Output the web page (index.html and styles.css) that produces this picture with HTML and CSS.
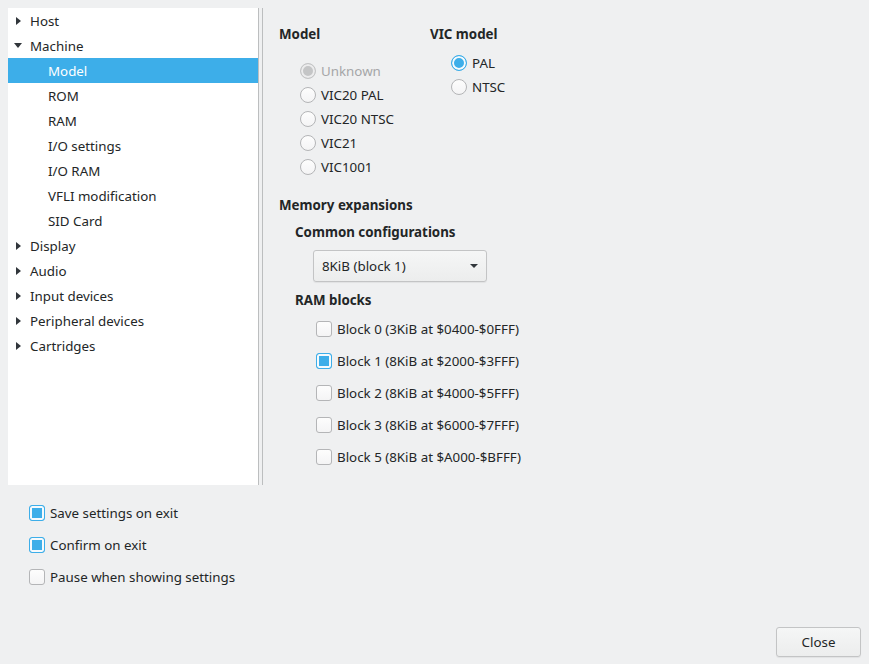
FILE: index.html
```html
<!DOCTYPE html>
<html lang="en">
<head>
<meta charset="UTF-8">
<title>Settings</title>
<link rel="stylesheet" href="styles.css">
</head>
<body>

<div class="window">
  <div class="top">
    <div class="tree">
      <div class="node"><span class="arrow closed"></span>Host</div>
      <div class="node"><span class="arrow open"></span>Machine</div>
      <div class="node child selected">Model</div>
      <div class="node child">ROM</div>
      <div class="node child">RAM</div>
      <div class="node child">I/O settings</div>
      <div class="node child">I/O RAM</div>
      <div class="node child">VFLI modification</div>
      <div class="node child">SID Card</div>
      <div class="node"><span class="arrow closed"></span>Display</div>
      <div class="node"><span class="arrow closed"></span>Audio</div>
      <div class="node"><span class="arrow closed"></span>Input devices</div>
      <div class="node"><span class="arrow closed"></span>Peripheral devices</div>
      <div class="node"><span class="arrow closed"></span>Cartridges</div>
    </div>
    <div class="splitter"></div>
    <div class="pane">
      <div class="models">
        <div class="group model-group">
          <div class="title">Model</div>
          <div class="radios">
            <div class="radio-row disabled"><span class="radio checked"></span>Unknown</div>
            <div class="radio-row"><span class="radio"></span>VIC20 PAL</div>
            <div class="radio-row"><span class="radio"></span>VIC20 NTSC</div>
            <div class="radio-row"><span class="radio"></span>VIC21</div>
            <div class="radio-row"><span class="radio"></span>VIC1001</div>
          </div>
        </div>
        <div class="group vic-group">
          <div class="title">VIC model</div>
          <div class="radios">
            <div class="radio-row"><span class="radio checked"></span>PAL</div>
            <div class="radio-row"><span class="radio"></span>NTSC</div>
          </div>
        </div>
      </div>

      <div class="title mem-title">Memory expansions</div>
      <div class="mem">
        <div class="title sub-title">Common configurations</div>
        <div class="combo">
          <span>8KiB (block 1)</span>
          <span class="combo-arrow"></span>
        </div>
        <div class="title sub-title ram-title">RAM blocks</div>
        <div class="blocks">
          <div class="check-row"><span class="check"></span>Block 0 (3KiB at $0400-$0FFF)</div>
          <div class="check-row"><span class="check checked"></span>Block 1 (8KiB at $2000-$3FFF)</div>
          <div class="check-row"><span class="check"></span>Block 2 (8KiB at $4000-$5FFF)</div>
          <div class="check-row"><span class="check"></span>Block 3 (8KiB at $6000-$7FFF)</div>
          <div class="check-row"><span class="check"></span>Block 5 (8KiB at $A000-$BFFF)</div>
        </div>
      </div>
    </div>
  </div>

  <div class="options">
    <div class="check-row"><span class="check checked"></span>Save settings on exit</div>
    <div class="check-row"><span class="check checked"></span>Confirm on exit</div>
    <div class="check-row"><span class="check"></span>Pause when showing settings</div>
  </div>

  <div class="buttons">
    <button class="btn">Close</button>
  </div>
</div>

</body>
</html>
```

FILE: styles.css
```css
/* Breeze-like settings dialog */
body {
  margin: 0;
  padding: 0;
  background-color: #eff0f1;
  color: #232627;
  font-family: "Noto Sans", "DejaVu Sans", sans-serif;
  font-size: 13.33px;
}
.window {
  height: 664px;
  display: flex;
  flex-direction: column;
}
.top {
  display: flex;
  padding: 8px 8px 0 8px;
  height: 477px;
}
.tree {
  width: 250px;
  background-color: #fff;
  border-right: 1px solid #bcbebf;
}
.node {
  height: 25px;
  display: flex;
  align-items: center;
  padding-left: 4px;
}
.node.child {
  padding-left: 40px;
}
.node.selected {
  background-color: #3daee9;
  color: #fff;
}
.arrow {
  width: 12px;
  margin-right: 6px;
  display: flex;
  justify-content: center;
}
.arrow::before {
  content: "";
  display: block;
}
.arrow.closed::before {
  margin-left: 1px;
  border-left: 5px solid #31363b;
  border-top: 4.5px solid transparent;
  border-bottom: 4.5px solid transparent;
}
.arrow.open::before {
  border-top: 5px solid #31363b;
  border-left: 4px solid transparent;
  border-right: 4px solid transparent;
}
.splitter {
  width: 3px;
  border-right: 1px solid #bcbebf;
}
.pane {
  padding: 15px 0 0 16px;
}
.title {
  font-weight: bold;
  height: 20px;
  line-height: 20px;
  padding-top: 1px;
  margin-bottom: -1px;
}
.models {
  display: flex;
}
.model-group {
  width: 151px;
}
.model-group .radios {
  margin-top: 16px;
}
.vic-group .radios {
  margin-top: 8px;
}
.radios {
  padding-left: 21px;
}
.radio-row {
  height: 24px;
  display: flex;
  align-items: center;
}
.radio-row.disabled {
  color: #a5a6a8;
}
.radio {
  width: 14px;
  height: 14px;
  border: 1px solid #b4b5b7;
  border-radius: 50%;
  background: linear-gradient(#fdfdfd, #f4f4f5);
  margin-right: 5px;
}
.radio.checked {
  border-color: #3daee9;
  background: #3daee9;
  box-shadow: inset 0 0 0 2px #f5fafd;
}
.disabled .radio.checked {
  border-color: #c4c5c6;
  background: #c4c5c6;
  box-shadow: inset 0 0 0 2px #ececed;
}
.mem-title {
  margin-top: 15px;
}
.mem {
  padding-left: 16px;
}
.sub-title {
  margin-top: 7px;
}
.combo {
  margin: 9px 0 0 18px;
  width: 156px;
  height: 30px;
  border: 1px solid #c3c4c5;
  border-radius: 3px;
  background: linear-gradient(#f5f6f6, #eceded);
  box-shadow: 0 1px 1px rgba(0, 0, 0, 0.06);
  display: flex;
  align-items: center;
  justify-content: space-between;
  padding: 0 8px;
}
.combo-arrow {
  border-top: 4px solid #31363b;
  border-left: 4px solid transparent;
  border-right: 4px solid transparent;
}
.ram-title {
  margin-top: 7px;
}
.blocks {
  margin-top: 4px;
  padding-left: 21px;
}
.check-row {
  height: 32px;
  display: flex;
  align-items: center;
}
.check {
  width: 14px;
  height: 14px;
  border: 1px solid #b4b5b7;
  border-radius: 3px;
  background: linear-gradient(#fdfdfd, #f4f4f5);
  margin-right: 5px;
}
.check.checked {
  border-color: #3daee9;
  background: #3daee9;
  box-shadow: inset 0 0 0 2px #f5fafd;
}
.options {
  margin-top: 12px;
  padding-left: 29px;
}
.buttons {
  margin-top: auto;
  display: flex;
  justify-content: flex-end;
  padding: 0 8px 7px 0;
}
.btn {
  width: 85px;
  height: 30px;
  font-family: "Noto Sans", "DejaVu Sans", sans-serif;
  font-size: 13.33px;
  color: #232627;
  border: 1px solid #c3c4c5;
  border-radius: 3px;
  background: linear-gradient(#f5f6f6, #eceded);
  box-shadow: 0 1px 1px rgba(0, 0, 0, 0.06);
}
```
